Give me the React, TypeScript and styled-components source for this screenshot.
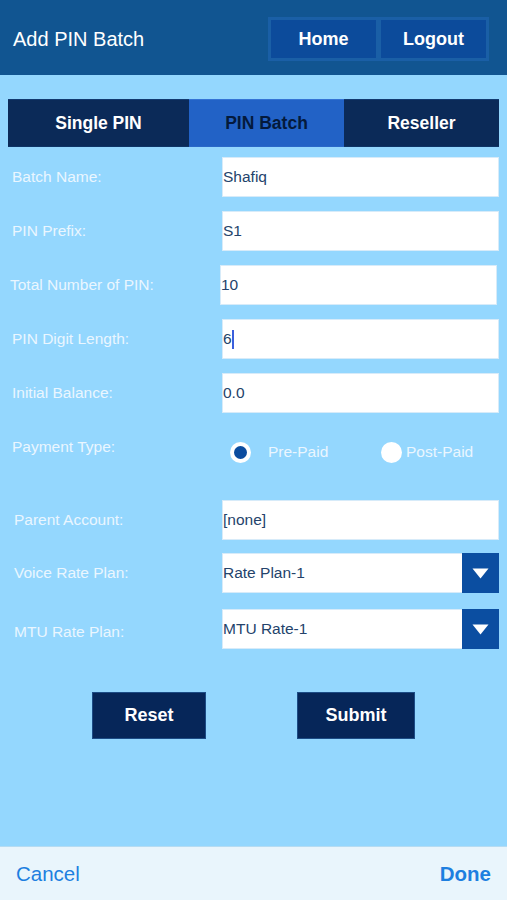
import React from "react";
import styled, { createGlobalStyle } from "styled-components";

const Global = createGlobalStyle`
  html, body { margin: 0; padding: 0; }
  body {
    background: #94d7fe;
    font-family: "Liberation Sans", Arial, Helvetica, sans-serif;
  }
  * { box-sizing: border-box; }
`;

const Page = styled.div`
  width: 507px;
  min-height: 900px;
  display: flex;
  flex-direction: column;
  background: #94d7fe;
`;

const Header = styled.header`
  height: 75px;
  background: #115591;
  display: flex;
  align-items: center;
  justify-content: space-between;
  padding: 3px 18px 0 13px;
`;

const Title = styled.h1`
  margin: 0;
  font-size: 20px;
  font-weight: 400;
  color: #ffffff;
`;

const NavGroup = styled.div`
  display: flex;
  gap: 5px;
  height: 44px;
  padding: 3px;
  background: #1a5fa6;
`;

const NavButton = styled.button`
  width: 105px;
  border: none;
  background: #0c4b9b;
  color: #ffffff;
  font-family: inherit;
  font-weight: 700;
  font-size: 18px;
  padding: 0;
`;

const Main = styled.main`
  padding: 24px 8px 0 8px;
  display: flex;
  flex-direction: column;
`;

const Tabs = styled.div`
  display: grid;
  grid-template-columns: 181px 155px 155px;
  height: 48px;
  margin-bottom: 10px;
`;

const Tab = styled.div<{ $active?: boolean }>`
  display: flex;
  align-items: center;
  justify-content: center;
  background: ${(p) => (p.$active ? "#2262c6" : "#0b2a58")};
  color: ${(p) => (p.$active ? "#041a3c" : "#ffffff")};
  font-weight: 700;
  font-size: 17.5px;
  border-top: 1px solid ${(p) => (p.$active ? "#3474d6" : "#123a70")};
  border-bottom: 1px solid ${(p) => (p.$active ? "#2a68c8" : "#0e3466")};
`;

const Row = styled.div<{ $top: number; $shift?: number }>`
  display: grid;
  grid-template-columns: 214px 277px;
  align-items: center;
  height: 40px;
  margin-top: ${(p) => p.$top}px;
  transform: translateX(${(p) => p.$shift || 0}px);
`;

const Label = styled.label<{ $indent?: number; $dy?: number }>`
  font-size: 15.5px;
  color: #eaf6ff;
  padding-left: ${(p) => p.$indent ?? 4}px;
  position: relative;
  top: ${(p) => p.$dy || 0}px;
`;

const Field = styled.div`
  height: 40px;
  background: #ffffff;
  border: 1px solid #d7ebf9;
  display: flex;
  align-items: center;
  padding-left: 0;
  font-size: 15.5px;
  color: #24436b;
`;

const Caret = styled.span`
  display: inline-block;
  width: 2px;
  height: 19px;
  background: #3b5fdc;
`;

const Select = styled(Field)`
  justify-content: space-between;
  padding-right: 0;
  border-right: none;
`;

const SelectArrow = styled.div`
  width: 37px;
  height: 40px;
  margin-top: -1px;
  margin-bottom: -1px;
  background: #0b4ea1;
  display: flex;
  align-items: center;
  justify-content: center;
`;

const Radios = styled.div`
  display: flex;
  align-items: center;
  padding-top: 4px;
  padding-left: 8px;
`;

const RadioOption = styled.div<{ $width: number; $gap: number }>`
  display: flex;
  align-items: center;
  width: ${(p) => p.$width}px;
  gap: ${(p) => p.$gap}px;
  color: #eaf6ff;
  font-size: 15.5px;
`;

const RadioCircle = styled.span<{ $checked?: boolean }>`
  width: 21px;
  height: 21px;
  border-radius: 50%;
  background: #ffffff;
  display: flex;
  align-items: center;
  justify-content: center;
  flex-shrink: 0;
  &::after {
    content: "";
    display: ${(p) => (p.$checked ? "block" : "none")};
    width: 13px;
    height: 13px;
    border-radius: 50%;
    background: #0a4c9f;
  }
`;

const Actions = styled.div`
  display: flex;
  margin-top: 43px;
  padding-left: 84px;
  gap: 91px;
`;

const ActionButton = styled.button<{ $width: number }>`
  width: ${(p) => p.$width}px;
  height: 47px;
  background: #062659;
  border: 1px solid #1c4c86;
  color: #ffffff;
  font-family: inherit;
  font-weight: 700;
  font-size: 18px;
  padding: 0;
`;

const Footer = styled.footer`
  margin-top: auto;
  height: 54px;
  background: #e9f5fc;
  border-top: 1px solid #b5dcf3;
  display: flex;
  align-items: center;
  justify-content: space-between;
  padding: 0 16px;
`;

const FooterLink = styled.span<{ $bold?: boolean }>`
  font-size: 20.5px;
  font-weight: ${(p) => (p.$bold ? 700 : 400)};
  color: #1d7fe0;
`;

const DownTriangle = () => (
  <svg width="17" height="11" viewBox="0 0 17 11">
    <path d="M0.5 0.5 L16.5 0.5 L8.5 10.5 Z" fill="#ffffff" />
  </svg>
);

export default function App() {
  return (
    <>
      <Global />
      <Page>
        <Header>
          <Title>Add PIN Batch</Title>
          <NavGroup>
            <NavButton>Home</NavButton>
            <NavButton>Logout</NavButton>
          </NavGroup>
        </Header>
        <Main>
          <Tabs>
            <Tab>Single PIN</Tab>
            <Tab $active>PIN Batch</Tab>
            <Tab>Reseller</Tab>
          </Tabs>

          <Row $top={0}>
            <Label>Batch Name:</Label>
            <Field>Shafiq</Field>
          </Row>
          <Row $top={14}>
            <Label>PIN Prefix:</Label>
            <Field>S1</Field>
          </Row>
          <Row $top={14} $shift={-2}>
            <Label>Total Number of PIN:</Label>
            <Field>10</Field>
          </Row>
          <Row $top={14}>
            <Label>PIN Digit Length:</Label>
            <Field>
              6<Caret />
            </Field>
          </Row>
          <Row $top={14}>
            <Label>Initial Balance:</Label>
            <Field>0.0</Field>
          </Row>
          <Row $top={17}>
            <Label $dy={-3}>Payment Type:</Label>
            <Radios>
              <RadioOption $width={151} $gap={17}>
                <RadioCircle $checked />
                Pre-Paid
              </RadioOption>
              <RadioOption $width={110} $gap={4}>
                <RadioCircle />
                Post-Paid
              </RadioOption>
            </Radios>
          </Row>
          <Row $top={30}>
            <Label $indent={6}>Parent Account:</Label>
            <Field>[none]</Field>
          </Row>
          <Row $top={13}>
            <Label $indent={6}>Voice Rate Plan:</Label>
            <Select>
              Rate Plan-1
              <SelectArrow>
                <DownTriangle />
              </SelectArrow>
            </Select>
          </Row>
          <Row $top={16}>
            <Label $indent={6} $dy={3}>MTU Rate Plan:</Label>
            <Select>
              MTU Rate-1
              <SelectArrow>
                <DownTriangle />
              </SelectArrow>
            </Select>
          </Row>

          <Actions>
            <ActionButton $width={114}>Reset</ActionButton>
            <ActionButton $width={118}>Submit</ActionButton>
          </Actions>
        </Main>
        <Footer>
          <FooterLink>Cancel</FooterLink>
          <FooterLink $bold>Done</FooterLink>
        </Footer>
      </Page>
    </>
  );
}
